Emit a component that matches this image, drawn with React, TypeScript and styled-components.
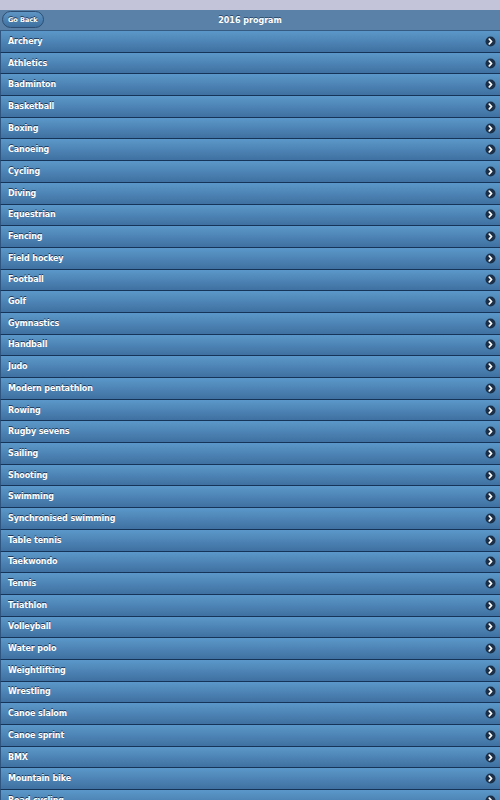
import styled, { createGlobalStyle } from "styled-components";

const sports = [
  "Archery",
  "Athletics",
  "Badminton",
  "Basketball",
  "Boxing",
  "Canoeing",
  "Cycling",
  "Diving",
  "Equestrian",
  "Fencing",
  "Field hockey",
  "Football",
  "Golf",
  "Gymnastics",
  "Handball",
  "Judo",
  "Modern pentathlon",
  "Rowing",
  "Rugby sevens",
  "Sailing",
  "Shooting",
  "Swimming",
  "Synchronised swimming",
  "Table tennis",
  "Taekwondo",
  "Tennis",
  "Triathlon",
  "Volleyball",
  "Water polo",
  "Weightlifting",
  "Wrestling",
  "Canoe slalom",
  "Canoe sprint",
  "BMX",
  "Mountain bike",
  "Road cycling",
];

const GlobalStyle = createGlobalStyle`
  html, body {
    margin: 0;
    padding: 0;
    background: #c3c3d9;
    font-family: "DejaVu Sans", Verdana, sans-serif;
    overflow: hidden;
  }
`;

const Arrow = () => (
  <svg width="11" height="11" viewBox="0 0 11 11">
    <circle cx="5.5" cy="5.5" r="5" fill="#1b3048" />
    <path
      d="M4.3 3.2 L6.6 5.5 L4.3 7.8"
      stroke="#fff"
      strokeWidth="1.7"
      fill="none"
      strokeLinecap="round"
      strokeLinejoin="round"
    />
  </svg>
);

export default function App() {
  return (
    <Page>
      <GlobalStyle />
      <TopBand />
      <Header>
        <BackButton>Go Back</BackButton>
        <Title>2016 program</Title>
      </Header>
      <List>
        {sports.map((s) => (
          <Row key={s}>
            <RowLabel>{s}</RowLabel>
            <Arrow />
          </Row>
        ))}
      </List>
    </Page>
  );
}

const Page = styled.div`
  width: 500px;
  height: 800px;
  overflow: hidden;
  display: flex;
  flex-direction: column;
`;

const TopBand = styled.div`
  height: 10px;
  background: #c3c3d9;
  flex-shrink: 0;
`;

const Header = styled.div`
  position: relative;
  height: 20px;
  flex-shrink: 0;
  display: flex;
  align-items: center;
  justify-content: center;
  background: #5a82a8;
  border-bottom: 1px solid #365b82;
`;

const BackButton = styled.div`
  position: absolute;
  left: 2px;
  top: 1px;
  height: 15px;
  padding: 0 5px;
  display: flex;
  align-items: center;
  border-radius: 9px;
  border: 1px solid #2d4e72;
  background: linear-gradient(#5f96c6, #3e6f9f);
  color: #fff;
  font-size: 6.5px;
  font-weight: bold;
  text-shadow: 0 -1px 0 #1d3550;
`;

const Title = styled.div`
  color: #fff;
  font-size: 8px;
  font-weight: bold;
  text-shadow: 0 -1px 0 #2b4a6c;
`;

const List = styled.div`
  display: flex;
  flex-direction: column;
`;

const Row = styled.div`
  height: 20.7px;
  flex-shrink: 0;
  display: flex;
  align-items: center;
  justify-content: space-between;
  padding: 0 4px 0 7px;
  border-bottom: 1px solid #163458;
  border-left: 1px solid #2f5680;
  background: linear-gradient(#5b98c9, #3f71a2);
`;

const RowLabel = styled.span`
  color: #fff;
  font-size: 8px;
  font-weight: bold;
  letter-spacing: -0.1px;
  text-shadow: 0 -1px 0 #1d3a5c;
`;
